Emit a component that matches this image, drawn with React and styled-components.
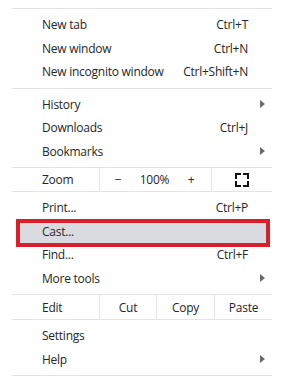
import React from "react";
import styled, { createGlobalStyle } from "styled-components";

const Global = createGlobalStyle`
  html, body { margin: 0; padding: 0; background: #ffffff; }
  body { font-family: "Open Sans", "Noto Sans", Arial, sans-serif; }
`;

const Page = styled.div`
  padding: 8px 17px 0 12px;
  width: 260px;
`;

const Menu = styled.div`
  width: 260px;
  display: flex;
  flex-direction: column;
  color: #262626;
  font-size: 12px;
  letter-spacing: -0.25px;
`;

const Separator = styled.div`
  height: 1px;
  background: #e4e4e4;
`;

const Group = styled.div`
  padding: 4px 0;
  display: flex;
  flex-direction: column;
`;

const Item = styled.div`
  position: relative;
  height: 23.5px;
  display: flex;
  align-items: center;
  padding: 0 ${(p) => (p.$arrow ? "7px" : "24px")} 0 30px;
`;

const Label = styled.span`
  position: relative;
  z-index: 1;
  flex: 1;
  white-space: nowrap;
`;

const Shortcut = styled.span`
  position: relative;
  z-index: 1;
  white-space: nowrap;
`;

const Arrow = styled.span`
  width: 0;
  height: 0;
  border-left: 5px solid #6a6a6a;
  border-top: 4px solid transparent;
  border-bottom: 4px solid transparent;
`;

const Highlight = styled.div`
  position: absolute;
  top: -1px;
  bottom: -4px;
  left: 4px;
  right: 2px;
  background: #dadbe0;
  border: 4px solid #d8202b;
  box-sizing: border-box;
  z-index: 0;
`;

const SplitRow = styled.div`
  height: ${(p) => p.$h}px;
  display: grid;
  grid-template-columns: ${(p) => p.$cols};
  align-items: stretch;
`;

const Cell = styled.div`
  display: flex;
  align-items: center;
  justify-content: ${(p) => (p.$left ? "flex-start" : "center")};
  padding-left: ${(p) => (p.$left ? "30px" : "0")};
  border-left: ${(p) => (p.$divider ? "1px solid #e4e4e4" : "none")};
  white-space: nowrap;
`;

const ZoomControls = styled.div`
  display: grid;
  grid-template-columns: 36px 37px 36px 1fr;
  align-items: center;
  border-left: 1px solid #e4e4e4;
  text-align: center;
`;

const ZoomSpan = styled.span`
  text-align: center;
`;

const FullscreenIcon = () => (
  <svg width="14" height="14" viewBox="0 0 14 14" fill="none">
    <path
      d="M1 5V1h4M9 1h4v4M13 9v4H9M5 13H1V9"
      stroke="#111"
      strokeWidth="2"
      strokeLinecap="square"
    />
  </svg>
);

const items = (list) =>
  list.map((it) => (
    <Item key={it.label} $arrow={it.arrow}>
      {it.highlight && <Highlight />}
      <Label>{it.label}</Label>
      {it.shortcut && <Shortcut>{it.shortcut}</Shortcut>}
      {it.arrow && <Arrow />}
    </Item>
  ));

export default function App() {
  return (
    <>
      <Global />
      <Page>
        <Menu>
          <Separator />
          <Group>
            {items([
              { label: "New tab", shortcut: "Ctrl+T" },
              { label: "New window", shortcut: "Ctrl+N" },
              { label: "New incognito window", shortcut: "Ctrl+Shift+N" },
            ])}
          </Group>
          <Separator />
          <Group>
            {items([
              { label: "History", arrow: true },
              { label: "Downloads", shortcut: "Ctrl+J" },
              { label: "Bookmarks", arrow: true },
            ])}
          </Group>
          <Separator />
          <SplitRow $h={23} $cols="87px 112px 1fr">
            <Cell $left>Zoom</Cell>
            <ZoomControls>
              <ZoomSpan>−</ZoomSpan>
              <ZoomSpan>100%</ZoomSpan>
              <ZoomSpan>+</ZoomSpan>
            </ZoomControls>
            <Cell $divider>
              <FullscreenIcon />
            </Cell>
          </SplitRow>
          <Separator />
          <Group>
            {items([
              { label: "Print...", shortcut: "Ctrl+P" },
              { label: "Cast...", highlight: true },
              { label: "Find...", shortcut: "Ctrl+F" },
              { label: "More tools", arrow: true },
            ])}
          </Group>
          <Separator />
          <SplitRow $h={24} $cols="87px 57px 58px 1fr">
            <Cell $left>Edit</Cell>
            <Cell $divider>Cut</Cell>
            <Cell $divider>Copy</Cell>
            <Cell $divider>Paste</Cell>
          </SplitRow>
          <Separator />
          <Group>
            {items([
              { label: "Settings" },
              { label: "Help", arrow: true },
            ])}
          </Group>
          <Separator />
        </Menu>
      </Page>
    </>
  );
}
